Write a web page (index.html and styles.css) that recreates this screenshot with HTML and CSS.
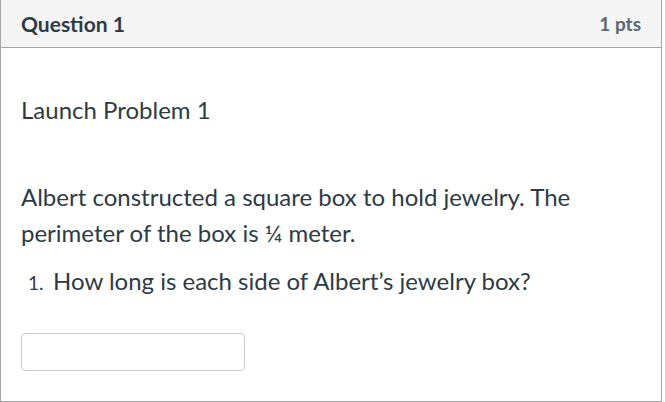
FILE: index.html
```html
<!DOCTYPE html>
<html>
<head>
<meta charset="utf-8">
<link rel="stylesheet" href="styles.css">
</head>
<body>
<div class="question">
  <div class="header">
    <span class="title">Question 1</span>
    <span class="pts">1 pts</span>
  </div>
  <div class="content">
    <p class="launch">Launch Problem 1</p>
    <p class="text">Albert constructed a square box to hold jewelry. The perimeter of the box is ¼ meter.</p>
    <ol class="list">
      <li class="item">How long is each side of Albert’s jewelry box?</li>
    </ol>
    <input class="answer" type="text">
  </div>
</div>
</body>
</html>
```

FILE: styles.css
```css
html, body {
  margin: 0;
  padding: 0;
  background: #fff;
}
body {
  font-family: Lato, "Open Sans", sans-serif;
  color: #2d3b45;
}
.question {
  width: 660px;
  height: 401px;
  border: 1px solid #a5a5a5;
  border-top: none;
  box-sizing: content-box;
}
.header {
  height: 47px;
  background: #f5f5f5;
  border-bottom: 1px solid #a5a5a5;
  display: flex;
  align-items: center;
  justify-content: space-between;
  padding: 0 20px 0 20px;
}
.title {
  font-weight: bold;
  font-size: 21px;
  color: #2d3b45;
}
.pts {
  font-weight: bold;
  font-size: 19px;
  color: #5b6770;
}
.content {
  padding: 0 20px;
}
.launch {
  margin: 0;
  padding-top: 47px;
  font-size: 24px;
  line-height: 30px;
}
.text {
  margin: 54px 0 0 0;
  font-size: 24px;
  line-height: 36px;
}
.list {
  margin: 12px 0 0 0;
  padding-left: 0;
  list-style: none;
  counter-reset: q;
  font-size: 24px;
  line-height: 36px;
}
.item {
  display: flex;
  align-items: baseline;
  height: 36px;
  counter-increment: q;
}
.item::before {
  content: counter(q) ".";
  font-size: 19px;
  width: 25px;
  margin-left: 7px;
  flex: none;
}
.answer {
  display: block;
  margin-top: 34px;
  width: 224px;
  height: 38px;
  box-sizing: border-box;
  border: 1px solid #c7cdd1;
  border-radius: 4px;
  background: #fff;
  padding: 0;
}
```
